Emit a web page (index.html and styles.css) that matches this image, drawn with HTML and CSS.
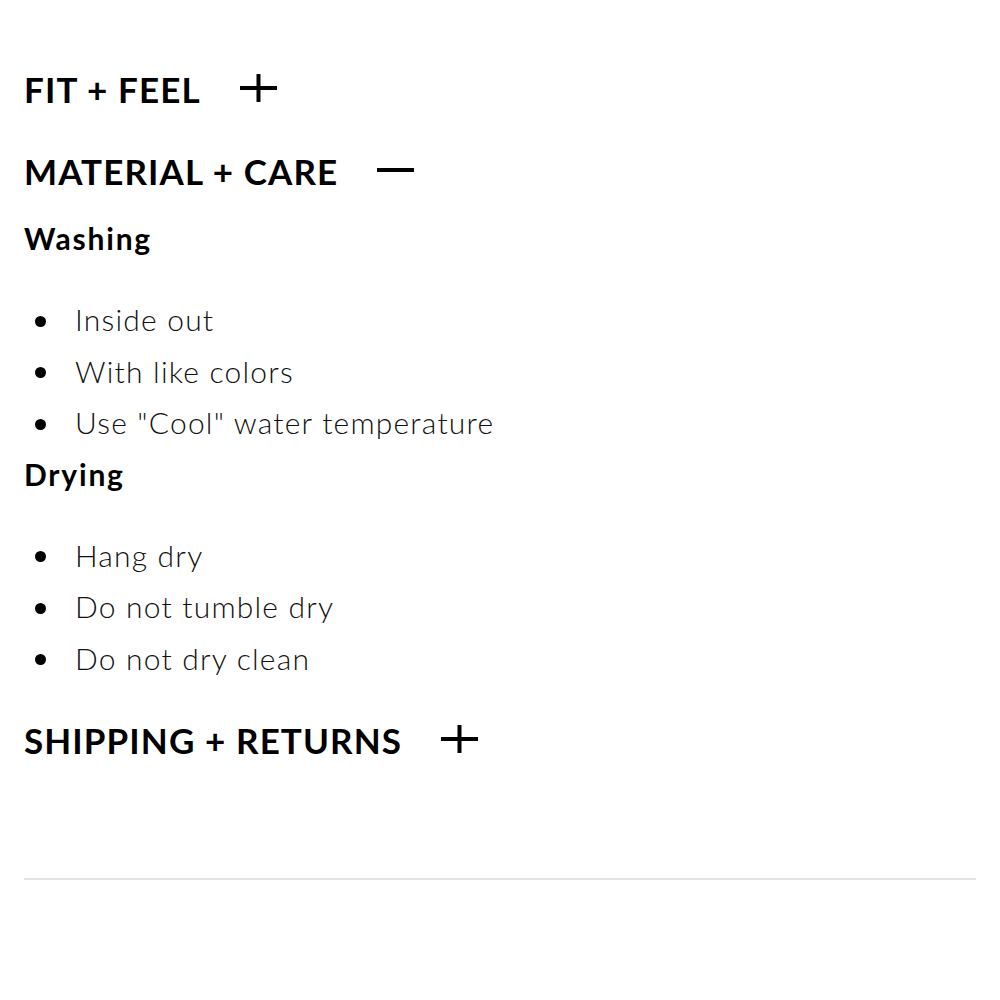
FILE: index.html
```html
<!DOCTYPE html>
<html>
<head>
<meta charset="utf-8">
<link rel="stylesheet" href="styles.css">
</head>
<body>
<div class="page">
  <section class="acc">
    <h2 class="acc-title"><span>FIT + FEEL</span>
      <svg class="icon" viewBox="0 0 37 28" width="37" height="28"><path d="M0 14H37M18.5 0V28" stroke="#000" stroke-width="4" fill="none"/></svg>
    </h2>
  </section>
  <section class="acc open">
    <h2 class="acc-title"><span>MATERIAL + CARE</span>
      <svg class="icon" viewBox="0 0 37 28" width="37" height="28"><path d="M0 14H37" stroke="#000" stroke-width="4" fill="none"/></svg>
    </h2>
    <div class="acc-body">
      <h3 class="sub">Washing</h3>
      <ul class="list">
        <li>Inside out</li>
        <li>With like colors</li>
        <li>Use "Cool" water temperature</li>
      </ul>
      <h3 class="sub sub-next">Drying</h3>
      <ul class="list">
        <li>Hang dry</li>
        <li>Do not tumble dry</li>
        <li>Do not dry clean</li>
      </ul>
    </div>
  </section>
  <section class="acc last">
    <h2 class="acc-title"><span>SHIPPING + RETURNS</span>
      <svg class="icon" viewBox="0 0 37 28" width="37" height="28"><path d="M0 14H37M18.5 0V28" stroke="#000" stroke-width="4" fill="none"/></svg>
    </h2>
  </section>
  <hr class="rule">
</div>
</body>
</html>
```
FILE: styles.css
```css
html, body { margin: 0; padding: 0; background: #fff; }
body { font-family: "Lato", "Liberation Sans", sans-serif; color: #111; }
.page { padding: 68px 24px 0 24px; }
.acc-title {
  margin: 0;
  display: flex;
  align-items: center;
  gap: 39px;
  font-size: 35px;
  font-weight: 700;
  letter-spacing: 1.1px;
  line-height: 42px;
  height: 42px;
  color: #000;
}
.acc-title .icon { display: block; flex: none; margin-top: -2px; }
.acc.open .acc-title { margin-top: 40px; }
.acc.last .acc-title { margin-top: 35px; }
.sub {
  margin: 30px 0 0 0;
  font-size: 30px;
  font-weight: 700;
  letter-spacing: 1.8px;
  line-height: 32px;
  color: #000;
}
.sub-next { margin-top: 9px; }
.list {
  list-style: none;
  margin: 0;
  padding: 40px 0 0 0;
}
.list li {
  position: relative;
  padding-left: 51px;
  font-size: 30px;
  font-weight: 300;
  letter-spacing: 1.2px;
  line-height: 51.5px;
  height: 51.5px;
  color: #111;
}
.list li::before {
  content: "";
  position: absolute;
  left: 11px;
  top: 50%;
  width: 11px;
  height: 11px;
  margin-top: -4px;
  border-radius: 50%;
  background: #000;
}
.rule {
  margin: 117px 0 0 0;
  border: 0;
  height: 2px;
  background: #e2e2e2;
}
```
